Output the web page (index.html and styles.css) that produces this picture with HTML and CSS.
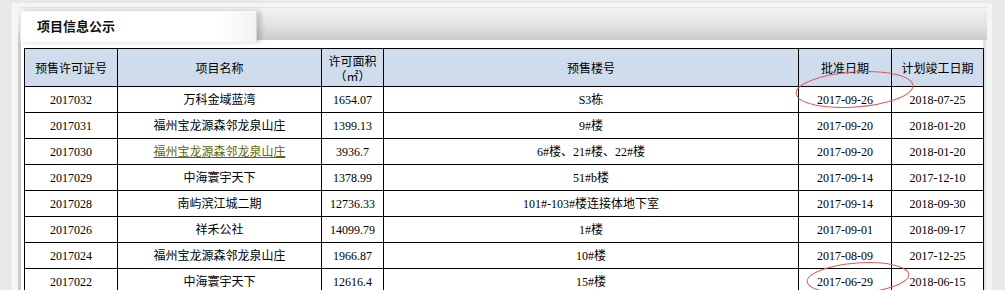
FILE: index.html
```html
<!DOCTYPE html>
<html lang="zh-CN">
<head>
<meta charset="utf-8">
<title>项目信息公示</title>
<link rel="stylesheet" href="styles.css">
</head>
<body>
<div class="frame">
  <div class="bar">
    <div class="tab">项目信息公示</div>
  </div>
  <div class="content">
    <table class="grid">
      <colgroup>
        <col class="c1"><col class="c2"><col class="c3"><col class="c4"><col class="c5"><col class="c6">
      </colgroup>
      <thead>
        <tr>
          <th>预售许可证号</th>
          <th>项目名称</th>
          <th class="two">许可面积<br>（㎡）</th>
          <th>预售楼号</th>
          <th>批准日期</th>
          <th>计划竣工日期</th>
        </tr>
      </thead>
      <tbody>
        <tr><td>2017032</td><td>万科金域蓝湾</td><td>1654.07</td><td>S3栋</td><td>2017-09-26</td><td>2018-07-25</td></tr>
        <tr><td>2017031</td><td>福州宝龙源森邻龙泉山庄</td><td>1399.13</td><td>9#楼</td><td>2017-09-20</td><td>2018-01-20</td></tr>
        <tr><td>2017030</td><td><a class="link" href="#">福州宝龙源森邻龙泉山庄</a></td><td>3936.7</td><td>6#楼、21#楼、22#楼</td><td>2017-09-20</td><td>2018-01-20</td></tr>
        <tr><td>2017029</td><td>中海寰宇天下</td><td>1378.99</td><td>51#b楼</td><td>2017-09-14</td><td>2017-12-10</td></tr>
        <tr><td>2017028</td><td>南屿滨江城二期</td><td>12736.33</td><td>101#-103#楼连接体地下室</td><td>2017-09-14</td><td>2018-09-30</td></tr>
        <tr><td>2017026</td><td>祥禾公社</td><td>14099.79</td><td>1#楼</td><td>2017-09-01</td><td>2018-09-17</td></tr>
        <tr><td>2017024</td><td>福州宝龙源森邻龙泉山庄</td><td>1966.87</td><td>10#楼</td><td>2017-08-09</td><td>2017-12-25</td></tr>
        <tr><td>2017022</td><td>中海寰宇天下</td><td>12616.4</td><td>15#楼</td><td>2017-06-29</td><td>2018-06-15</td></tr>
      </tbody>
    </table>
  </div>
</div>
<svg class="marks" width="1005" height="290" viewBox="0 0 1005 290" aria-hidden="true">
  <ellipse cx="854.5" cy="89.5" rx="58.5" ry="17.5" transform="rotate(-4 854.5 89.5)" fill="none" stroke="#e05a5a" stroke-width="1"/>
  <ellipse cx="858" cy="278" rx="51" ry="15" transform="rotate(-4 858 278)" fill="none" stroke="#e05a5a" stroke-width="1"/>
</svg>
</body>
</html>
```

FILE: styles.css
```css
html, body {
  margin: 0;
  padding: 0;
}

body {
  background: #e9e9e9;
  width: 1005px;
  height: 290px;
  overflow: hidden;
  position: relative;
}

.frame {
  margin: 3px 0 0 12px;
  width: 980px;
  height: 300px;
  background: #f5f5f5;
  border-left: 1px solid #fbfbfb;
  box-sizing: border-box;
  padding-top: 4px;
}

.bar {
  margin: 0 5px 0 5px;
  height: 33px;
  background: linear-gradient(to bottom, #f3f3f3 0%, #e2e2e2 55%, #cbcbcb 100%);
  border-top: 1px solid #e4e4e4;
  box-sizing: border-box;
  padding: 3px 0 0 2px;
}

.tab {
  width: 237px;
  height: 31px;
  box-sizing: border-box;
  background: linear-gradient(to right, #ffffff 0%, #ffffff 85%, #f2f2f2 100%);
  border-top: 1px solid #f8f8f8;
  border-left: 1px solid #e6e6e6;
  border-right: 1px solid #d8d8d8;
  box-shadow: 4px 0 5px rgba(0, 0, 0, 0.18);
  font-family: "Noto Sans CJK SC", "Liberation Sans", sans-serif;
  font-weight: bold;
  font-size: 13px;
  line-height: 28px;
  padding-left: 16px;
  color: #111;
  position: relative;
}

.content {
  margin-left: 5px;
  width: 968px;
  box-sizing: border-box;
  background: #ffffff;
  border-left: 3px solid #cbcbcb;
  border-right: 3px solid #e3e3e3;
  padding: 8px 3px 0 3px;
  height: 260px;
}

.grid {
  width: 959px;
  border-collapse: collapse;
  table-layout: fixed;
  font-size: 12px;
  color: #000;
}

.c1 { width: 93px; }
.c2 { width: 204px; }
.c3 { width: 62px; }
.c4 { width: 415px; }
.c5 { width: 93px; }
.c6 { width: 92px; }

.grid th,
.grid td {
  border: 1px solid #000;
  text-align: center;
  padding: 0;
  white-space: nowrap;
}

.grid th {
  background: #cfdcec;
  font-family: "Noto Sans CJK SC", "Liberation Sans", sans-serif;
  font-weight: normal;
  height: 36px;
  line-height: 15px;
}

.grid th.two {
  padding-top: 1px;
}

.grid td {
  font-family: "Liberation Serif", "Noto Sans CJK SC", serif;
  height: 25px;
  line-height: 16px;
}

.link {
  color: #666600;
  text-decoration: underline;
}

.marks {
  position: absolute;
  left: 0;
  top: 0;
  pointer-events: none;
}
```
